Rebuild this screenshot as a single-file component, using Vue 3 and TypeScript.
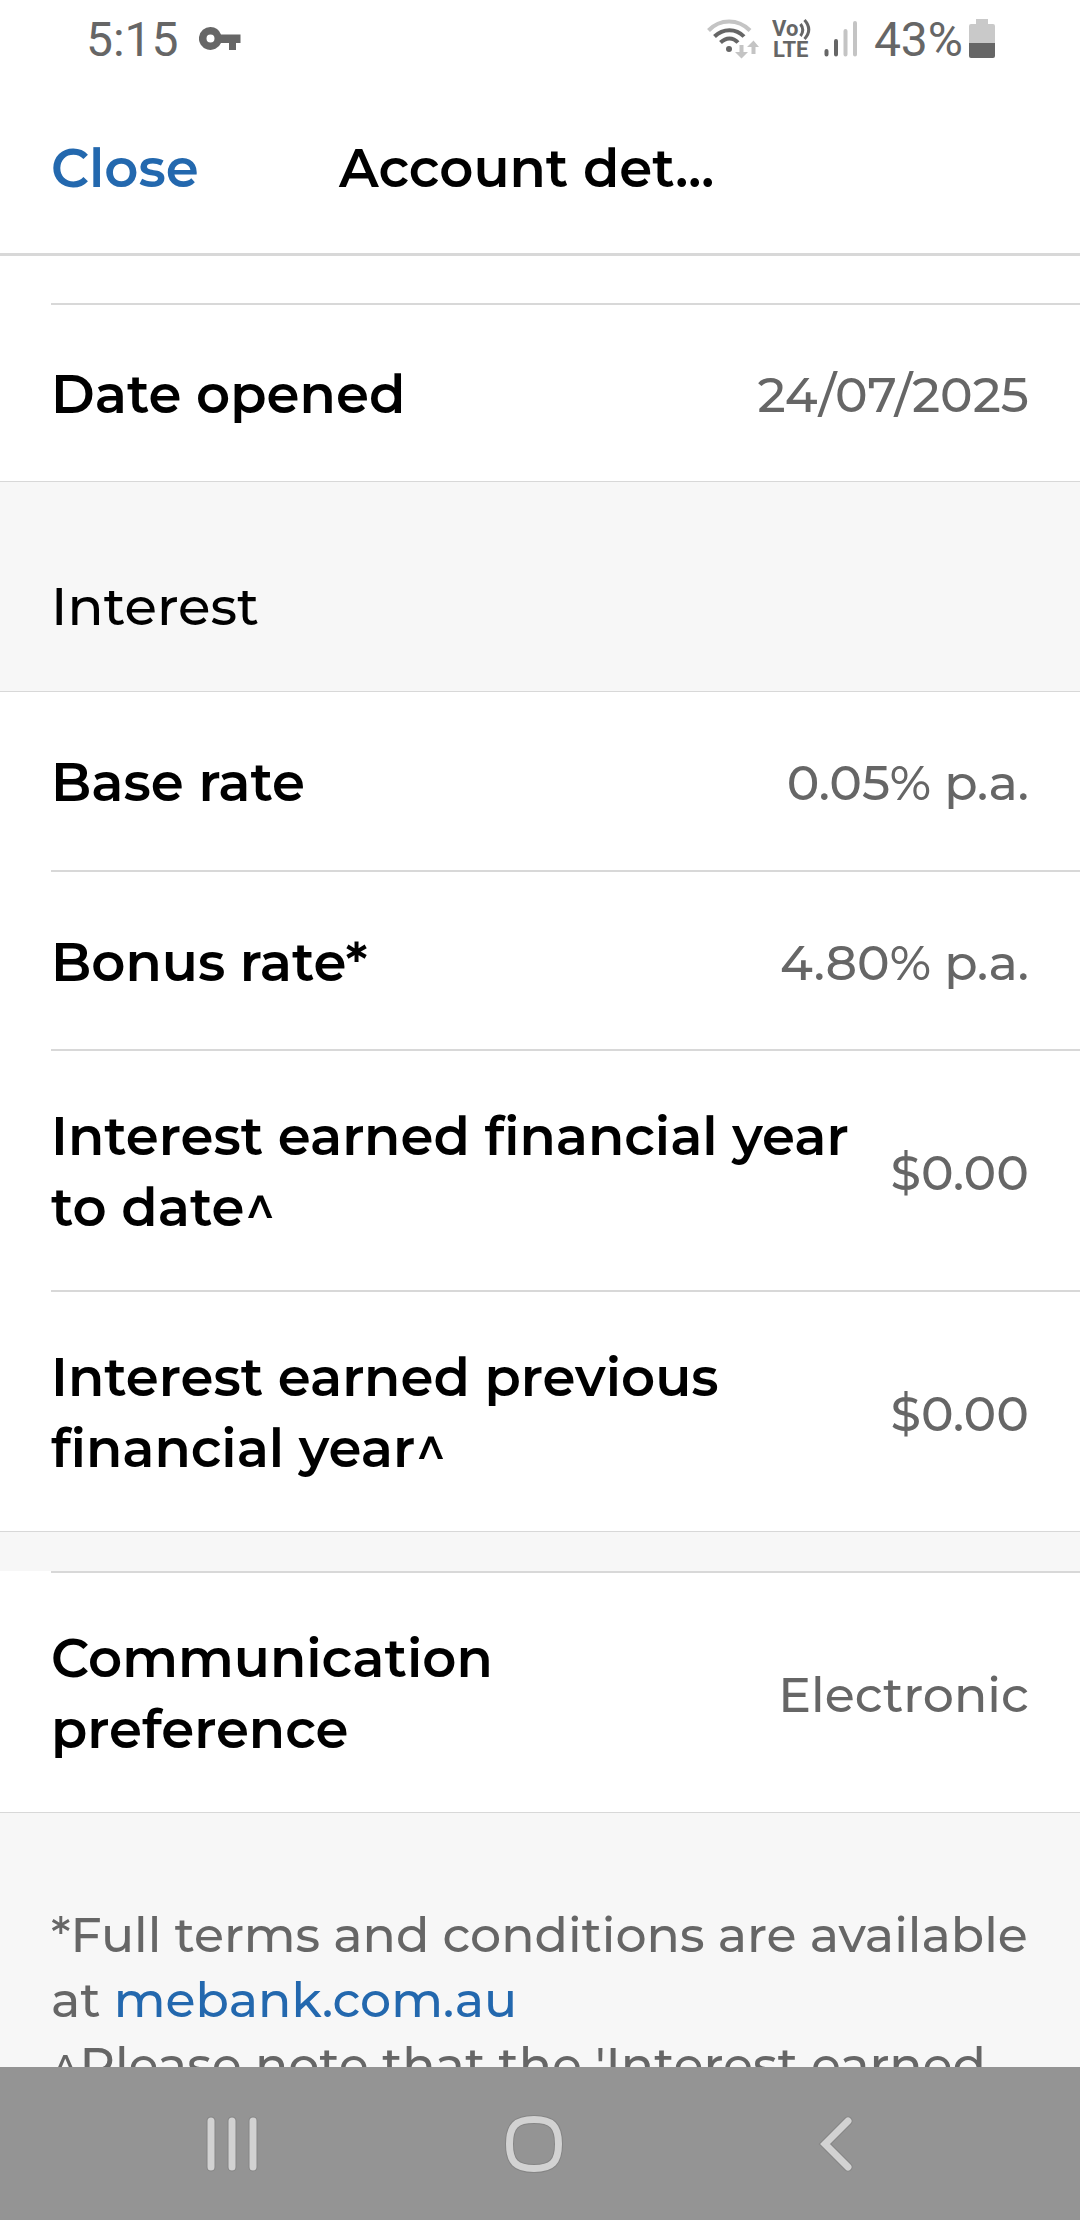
<script setup lang="ts">
interface Detail {
  label: string
  value: string
}

const opened: Detail[] = [{ label: 'Date opened', value: '24/07/2025' }]

const interest: Detail[] = [
  { label: 'Base rate', value: '0.05% p.a.' },
  { label: 'Bonus rate*', value: '4.80% p.a.' },
  { label: 'Interest earned financial year to date^', value: '$0.00' },
  { label: 'Interest earned previous financial year^', value: '$0.00' },
]

const preferences: Detail[] = [{ label: 'Communication preference', value: 'Electronic' }]
</script>

<template>
  <div class="screen">
    <div class="status">
      <span>5:15</span>
      <svg class="key" width="42" height="24" viewBox="0 0 42 24" aria-hidden="true">
        <path
          fill="#666"
          fill-rule="evenodd"
          d="M11.500 0A11.500 11.500 0 1 0 22 16H30V23H37V16H41.500V7.500H22A11.500 11.500 0 0 0 11.500 0ZM11.500 7.500a4 4 0 1 1 0 8a4 4 0 0 1 0-8Z"
        />
      </svg>
      <div class="indicators">
        <svg width="52" height="40" viewBox="0 0 52 40" aria-hidden="true">
          <g fill="none" stroke-width="4">
            <path stroke="#c4c4c4" d="M1.500 11.500C13-0.500 31-0.500 43 11.500" />
            <path stroke="#666" d="M7.500 17.500C16 9 29 9 37 17.500M13.500 23.500C19 18 26 18 31 23.500" />
          </g>
          <circle cx="22" cy="30" r="3" fill="#666" />
          <path fill="#c4c4c4" d="M32.500 26h4v7h4.500l-6.500 6.500L28 33h4.500zM44.500 35h4v-7h3.500L46.500 21.500 40 28h4.500z" />
        </svg>
        <svg class="volte" width="40" height="52" viewBox="-1 -6 40 52" role="img" aria-label="VoLTE">
          <text x="-1" y="17">Vo</text>
          <text x="0" y="38">LTE</text>
          <path fill="none" stroke="#666" stroke-width="3" d="M27.500 5Q32 11 27.500 17M31.500 1Q40 10.500 31.500 20" />
        </svg>
        <svg class="signal" width="34" height="38" viewBox="0 0 34 38" aria-hidden="true">
          <g stroke-width="4" stroke-linecap="round">
            <path stroke="#666" d="M2.500 31v3.500M12 21v13.500" />
            <path stroke="#c4c4c4" d="M21.500 11v23.500M31 3v31.500" />
          </g>
        </svg>
        <span>43%</span>
        <svg class="battery" width="26" height="40" viewBox="0 0 26 40" aria-hidden="true">
          <path fill="#c9c9c9" d="M7 0h12v5h5q2 0 2 2v17H0V7q0-2 2-2h5z" />
          <path fill="#666" d="M0 24h26v13q0 2-2 2H2q-2 0-2-2z" />
        </svg>
      </div>
    </div>

    <header class="header">
      <button type="button" class="close">Close</button>
      <h1 class="title">Account det...</h1>
    </header>

    <main class="content">
      <dl class="list continued">
        <div v-for="item in opened" :key="item.label" class="row">
          <dt>{{ item.label }}</dt>
          <dd>{{ item.value }}</dd>
        </div>
      </dl>

      <h2 class="section-title">Interest</h2>

      <dl class="list">
        <div v-for="item in interest" :key="item.label" class="row">
          <dt>{{ item.label }}</dt>
          <dd>{{ item.value }}</dd>
        </div>
      </dl>

      <dl class="list separate">
        <div v-for="item in preferences" :key="item.label" class="row">
          <dt>{{ item.label }}</dt>
          <dd>{{ item.value }}</dd>
        </div>
      </dl>

      <div class="notes">
        <p>*Full terms and conditions are available at <a href="#">mebank.com.au</a></p>
        <p>^Please note that the 'Interest earned</p>
      </div>
    </main>

    <nav class="nav" aria-label="System">
      <button type="button" aria-label="Recent apps">
        <svg width="56" height="60" viewBox="0 0 56 60">
          <g fill="none" stroke-linecap="round">
            <path stroke="#858585" stroke-width="9" d="M7 7v46M28 7v46M49 7v46" />
            <path stroke="#d2d2d2" stroke-width="7" d="M7 7v46M28 7v46M49 7v46" />
          </g>
        </svg>
      </button>
      <button type="button" aria-label="Home">
        <svg width="60" height="60" viewBox="0 0 60 60">
          <g fill="none">
            <path
              stroke="#858585"
              stroke-width="9"
              d="M30 5.500C48 5.500 54.500 12 54.500 30S48 54.500 30 54.500 5.500 48 5.500 30 12 5.500 30 5.500Z"
            />
            <path
              stroke="#d2d2d2"
              stroke-width="7"
              d="M30 5.500C48 5.500 54.500 12 54.500 30S48 54.500 30 54.500 5.500 48 5.500 30 12 5.500 30 5.500Z"
            />
          </g>
        </svg>
      </button>
      <button type="button" aria-label="Back">
        <svg width="36" height="60" viewBox="0 0 36 60">
          <g fill="none" stroke-linecap="round">
            <path stroke="#858585" stroke-width="9" d="M30 7L7 30l23 23" />
            <path stroke="#d2d2d2" stroke-width="7" d="M30 7L7 30l23 23" />
          </g>
        </svg>
      </button>
    </nav>
  </div>
</template>

<style>
body {
  margin: 0;
}
</style>

<style scoped>
.screen {
  display: flex;
  flex-direction: column;
  height: 100vh;
  background: #fff;
  color: #000;
  font-family: Montserrat, Inter, sans-serif;
  font-size: 53px;
  line-height: 71px;
}

.status {
  display: flex;
  flex: none;
  align-items: center;
  height: 78px;
  padding: 0 85px 0 86px;
  color: #666;
  font-family: Roboto, sans-serif;
  font-size: 48px;
}

.key {
  margin-left: 20px;
}

.indicators {
  display: flex;
  align-items: center;
  margin-left: auto;
}

.volte {
  margin-left: 13px;
  fill: #666;
  font-size: 22px;
  font-weight: 700;
  line-height: 22px;
}

.signal {
  margin: 0 16px 0 12px;
}

.battery {
  margin-left: 6px;
}

.header {
  display: grid;
  flex: none;
  grid-template-columns: 288px 1fr;
  align-items: center;
  height: 169px;
  padding: 6px 51px 0;
  border-bottom: 3px solid #d8d8d8;
}

.close {
  padding: 0;
  border: 0;
  background: none;
  color: #2368ae;
  font: inherit;
  font-weight: 600;
  text-align: left;
}

.title {
  margin: 0;
  font-size: 53px;
  font-weight: 600;
}

.content {
  flex: 1;
  min-height: 0;
  overflow-y: auto;
  background: #f7f7f7;
  scrollbar-width: none;
}

.list {
  margin: 0;
  border-bottom: 1px solid #d8d8d8;
  background: #fff;
}

.row {
  display: flex;
  align-items: center;
  justify-content: space-between;
  gap: 40px;
  box-sizing: border-box;
  min-height: 179px;
  margin-left: 51px;
  padding: 50px 51px 47px 0;
  border-top: 2px solid #d8d8d8;
}

.row:first-child {
  min-height: 178px;
}

.list:not(.continued, .separate) .row:first-child {
  border-top: 0;
}

.continued {
  padding-top: 47px;
}

.separate {
  margin-top: 39px;
}

dt {
  font-weight: 600;
}

dd {
  flex: none;
  margin: 0;
  color: #666;
  font-size: 49px;
  font-weight: 500;
}

.section-title {
  margin: 0;
  padding: 89px 51px 49px;
  border-bottom: 1px solid #d8d8d8;
  font-size: 53px;
  font-weight: 500;
}

.notes {
  padding: 89px 51px 49px;
  color: #666;
  font-size: 49px;
  font-weight: 500;
  line-height: 65px;
}

.notes p {
  margin: 0;
}

.notes a {
  color: #2368ae;
  text-decoration: none;
}

.nav {
  display: grid;
  flex: none;
  grid-template-columns: repeat(3, 1fr);
  height: 153px;
  padding: 0 93px 0 81px;
  background: #949494;
}

.nav button {
  display: flex;
  align-items: center;
  justify-content: center;
  padding: 0;
  border: 0;
  background: none;
}
</style>
